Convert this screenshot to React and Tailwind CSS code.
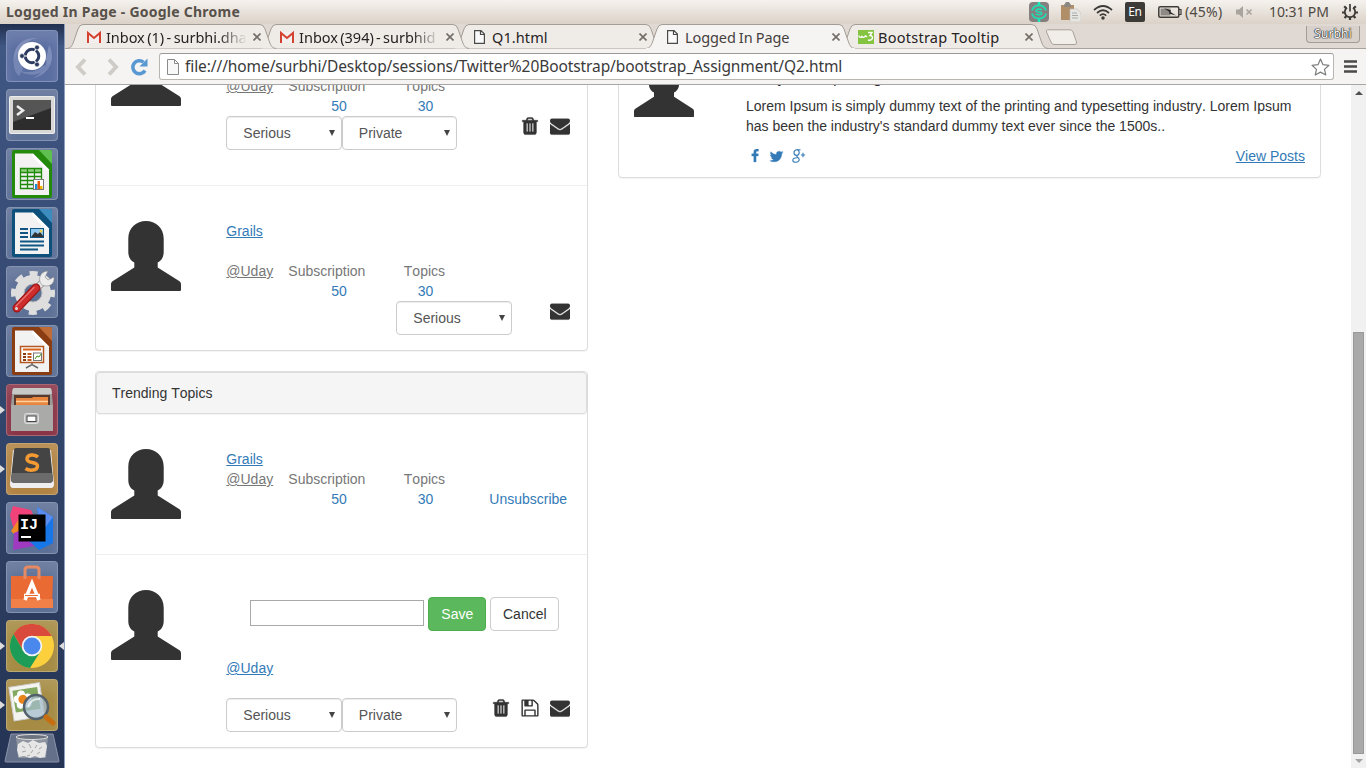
import React from "react";

const FA = {
  envelope:
    "M1792 710v794q0 66-47 113t-113 47h-1472q-66 0-113-47t-47-113v-794q44 49 101 87 362 246 497 345 57 42 92.500 65.500t94.500 48 110 24.500h2q51 0 110-24.500t94.500-48 92.500-65.500q170-123 498-345 57-39 100-87zm0-294q0 79-49 151t-122 123q-376 261-468 325-10 7-42.500 31t-54 38.500-52 32.500-57.500 27-50 9h-2q-23 0-50-9t-57.500-27-52-32.500-54-38.500-42.500-31q-91-64-262-182.500t-205-142.500q-62-42-117-115.500t-55-136.500q0-78 41.500-130t118.500-52h1472q65 0 112.500 47t47.500 113z",
  trash:
    "M704 1376v-704q0-14-9-23t-23-9h-64q-14 0-23 9t-9 23v704q0 14 9 23t23 9h64q14 0 23-9t9-23zm256 0v-704q0-14-9-23t-23-9h-64q-14 0-23 9t-9 23v704q0 14 9 23t23 9h64q14 0 23-9t9-23zm256 0v-704q0-14-9-23t-23-9h-64q-14 0-23 9t-9 23v704q0 14 9 23t23 9h64q14 0 23-9t9-23zm-544-992h448l-48-117q-7-9-17-11h-317q-10 2-17 11zm928 32v64q0 14-9 23t-23 9h-96v948q0 83-47 143.500t-113 60.500h-832q-66 0-113-58.500t-47-141.500v-952h-96q-14 0-23-9t-9-23v-64q0-14 9-23t23-9h309l70-167q15-37 54-63t79-26h320q40 0 79 26t54 63l70 167h309q14 0 23 9t9 23z",
  floppy:
    "M512 1536h768v-384h-768v384zm896 0h128v-896q0-14-10-38.500t-20-34.500l-281-281q-10-10-34-20t-39-10v416q0 40-28 68t-68 28h-576q-40 0-68-28t-28-68v-416h-128v1280h128v-416q0-40 28-68t68-28h832q40 0 68 28t28 68v416zm-384-928v-320q0-13-9.500-22.500t-22.500-9.500h-192q-13 0-22.500 9.500t-9.500 22.500v320q0 13 9.500 22.500t22.500 9.500h192q13 0 22.500-9.500t9.500-22.500zm640 32v928q0 40-28 68t-68 28h-1344q-40 0-68-28t-28-68v-1344q0-40 28-68t68-28h928q40 0 88 20t76 48l280 280q28 28 48 76t20 88z",
  facebook:
    "M1343 12v264h-157q-86 0-116 36t-30 108v189h293l-39 296h-254v759h-306v-759h-255v-296h255v-218q0-186 104-288.500t277-102.500q147 0 228 12z",
  twitter:
    "M1684 408q-67 98-162 167 1 14 1 42 0 130-38 259.500t-115.500 248.500-184.500 210.500-258 146-323 54.500q-271 0-496-145 35 4 78 4 225 0 401-138-105-2-188-64.500t-114-159.500q33 5 61 5 43 0 85-11-112-23-185.500-111.500t-73.500-205.500v-4q68 38 146 41-66-44-105-115t-39-154q0-88 44-163 121 149 294.500 238.500t371.500 99.500q-8-38-8-74 0-134 94.500-228.500t228.500-94.500q140 0 236 102 109-21 205-78-37 115-142 178 93-10 186-50z",
};

function Fa({ name, className }) {
  return (
    <svg
      viewBox="0 0 1792 1792"
      className={className}
      fill="currentColor"
      stroke="currentColor"
      strokeWidth={name === "floppy" ? 0 : 36}
    >
      <path d={FA[name]} />
    </svg>
  );
}

function GooglePlus() {
  return (
    <svg viewBox="0 0 14 14" className="h-3.5 w-3.5" fill="none" stroke="currentColor" strokeWidth="1.1">
      <path d="M8.500.7H5C3 .7 2 2.100 2 3.700c0 1.600 1.100 2.700 2.700 2.700 1.500 0 2.500-1.100 2.500-2.800C7.200 2 6.200.9 4.900.8M5 6.400c-.8 1 .1 1.500 1.200 2.300 2.200 1.600.7 4.600-2.200 4.600-2 0-3.200-.8-3.200-2.100 0-1.700 1.900-2.600 4.600-2.500M11 3.800v4.400M8.900 6H13.200" />
    </svg>
  );
}

function Avatar({ className = "h-[70px] w-[70px]" }) {
  return (
    <svg viewBox="0 0 70 70" className={"block shrink-0 " + className} fill="#333">
      <path d="M35 0C44.500 0 52.700 7 52.700 17.500V31C52.700 36.500 50 40 46.700 41.500V46.500L68.500 60.300Q70 61.300 70 63V69Q70 70 69 70H1Q0 70 0 69V63Q0 61.300 1.500 60.300L23.300 46.500V41.500C20 40 17.300 36.500 17.300 31V17.500C17.300 7 25.500 0 35 0Z" />
    </svg>
  );
}

function Tile({ className = "bg-[#5d7096]", children }) {
  return (
    <div
      className={
        "relative flex h-[52px] w-[52px] shrink-0 items-center justify-center rounded-[4px] border border-white/25 shadow-[inset_0_10px_12px_rgba(255,255,255,0.12)] " +
        className
      }
    >
      {children}
    </div>
  );
}

function Pip({ right }) {
  return (
    <svg viewBox="0 0 5 8" className={"absolute top-[21px] h-2 w-[5px] " + (right ? "-right-[7px]" : "-left-[7px]")} fill="#ddd">
      <path d={right ? "M5 0V8L0 4z" : "M0 0V8L5 4z"} />
    </svg>
  );
}

function DocIcon({ color, fold, children }) {
  return (
    <svg viewBox="0 0 40 48" className="h-12 w-10">
      <rect width="40" height="48" rx="2" fill={color} />
      <path d="M27 0H38Q40 0 40 2V14z" fill={fold} />
      <path d="M3 3.500H21L37 19.500V45H3z" fill="#f2f2f2" />
      <path d="M21 3.500L37 19.500 34 20.500 20 6.500z" fill="#fff" />
      {children}
    </svg>
  );
}

function Launcher() {
  return (
    <aside className="flex w-[65px] shrink-0 flex-col items-start gap-[7px] overflow-hidden border-r border-[#8e9fbd] bg-linear-to-b from-[#20304f] via-[#405784] via-3% to-[#253454] pt-1.5 pl-1.5">
      <Tile className="bg-[#5a6ea1]">
        <svg viewBox="0 0 50 50" className="h-[50px] w-[50px]">
          <path d="M7 34C4 14 18 4 33 8 24 7 17 12 15 20zM42 14c8 14 0 30-16 33 11-5 15-12 13-19z" fill="#8795bf" opacity=".8" />
          <path d="M12 45C2 36 8 20 20 13c-7 9-7 18-4 25zM44 33C36 46 20 46 11 39c10 4 19 2 25-4z" fill="#7586b5" />
          <circle cx="25" cy="25" r="14" fill="#fff" />
          <circle cx="25" cy="25" r="6.800" fill="none" stroke="#2c3b5f" strokeWidth="3" />
          <path d="M25 25L30 16M25 25L30 34M25 25H14" stroke="#fff" strokeWidth="1.200" />
          <circle cx="15" cy="25" r="2.400" fill="#2c3b5f" stroke="#fff" strokeWidth=".6" />
          <circle cx="30" cy="16.500" r="2.400" fill="#2c3b5f" stroke="#fff" strokeWidth=".6" />
          <circle cx="30" cy="33.500" r="2.400" fill="#2c3b5f" stroke="#fff" strokeWidth=".6" />
        </svg>
      </Tile>
      <Tile>
        <svg viewBox="0 0 46 38" className="h-[38px] w-[46px] shrink-0">
          <rect x=".5" y=".5" width="45" height="37" rx="1" fill="#d8d8d6" stroke="#eee" />
          <rect x="4" y="4" width="38" height="30" fill="#2d2d2d" />
          <path d="M4 4H42V12L4 26z" fill="#555" />
          <path d="M8 10L14 14.500 8 19" fill="none" stroke="#eee" strokeWidth="2.500" />
          <rect x="17" y="21" width="8" height="2" fill="#fff" />
        </svg>
      </Tile>
      <Tile>
        <DocIcon color="#238a0c" fold="#5fc04f">
          <path d="M8 18H30V22.500H8z" fill="#8fd07c" />
          <g fill="none" stroke="#1f8a0a" strokeWidth="1.300">
            <path d="M8.500 18.500H29.500V38.500H8.500zM8 22.500H30M8 26.500H30M8 30.500H30M8 34.500H30M15.500 18.500V38.500M22.500 18.500V38.500" />
          </g>
          <rect x="21.500" y="29.500" width="10" height="10" fill="#fff" stroke="#777" />
          <path d="M23 34h2.500v5H23z" fill="#1b90d8" />
          <path d="M25.500 31h2.500v8h-2.500z" fill="#e8590c" />
          <path d="M28 36h2.500v3H28z" fill="#f3b400" />
        </DocIcon>
      </Tile>
      <Tile>
        <DocIcon color="#0d507c" fold="#3d8cc0">
          <path d="M8 20h8M8 24h8M8 28h8M8 32.500h24M8 36.500h24M8 40.500h18" stroke="#0f5684" strokeWidth="1.800" />
          <rect x="18.500" y="19.500" width="13" height="9" fill="#8ec8ee" stroke="#0f5684" />
          <path d="M19 28l4-5 3 2 2-2 4 5z" fill="#333" />
          <circle cx="29" cy="22" r="1.500" fill="#f2d24b" />
        </DocIcon>
      </Tile>
      <Tile>
        <svg viewBox="0 0 48 48" className="h-12 w-12 shrink-0">
          <circle cx="25" cy="25" r="13.500" fill="none" stroke="#dedede" strokeWidth="9" />
          <circle cx="25" cy="25" r="19.500" fill="none" stroke="#dedede" strokeWidth="5" strokeDasharray="8 7.320" strokeDashoffset="4" />
          <circle cx="25" cy="25" r="9" fill="none" stroke="#bbb" />
          <path d="M28 21L36 13" stroke="#888" strokeWidth="7" />
          <path d="M28 21L36 13" stroke="#e8e8e8" strokeWidth="5.500" />
          <path d="M40 3L37 9 40 12 46 9C47 16 41 20 34 17 29 12 32 3 40 3z" fill="#ececec" stroke="#888" strokeWidth=".6" />
          <path d="M9 40L28 20" stroke="#9c1414" strokeWidth="9" strokeLinecap="round" />
          <path d="M9 40L28 20" stroke="#cf2c2c" strokeWidth="6.500" strokeLinecap="round" />
          <path d="M8 38L26 19.500" stroke="#e87474" strokeWidth="1.300" strokeLinecap="round" />
          <circle cx="8.500" cy="40.500" r="1.500" fill="#ddd" />
        </svg>
      </Tile>
      <Tile>
        <DocIcon color="#8a3d12" fold="#c06c38">
          <rect x="8.500" y="19.500" width="23" height="16" fill="#fff" stroke="#b4561f" strokeWidth="1.500" />
          <path d="M11 22.500h18" stroke="#d9621a" strokeWidth="2" />
          <path d="M11 27h3M11 30h3M11 33h3" stroke="#8a3d12" strokeWidth="2" />
          <path d="M15.500 27h4M15.500 30h4M15.500 33h4" stroke="#c05a20" strokeWidth="2" />
          <rect x="21.500" y="26" width="8" height="7.500" fill="#fff" stroke="#777" />
          <path d="M23 32l2-3 2 1 2-3" stroke="#3a9a1a" fill="none" />
          <path d="M20 36v2M14 41l6-3.500 6 3.500" stroke="#666" strokeWidth="1.500" fill="none" />
        </DocIcon>
      </Tile>
      <Tile className="bg-[#8a3446]">
        <Pip />
        <svg viewBox="0 0 44 44" className="h-11 w-11 shrink-0">
          <path d="M4 0H40Q41 0 41.500 2L43 17V43H1V17L2.500 2Q3 0 4 0z" fill="#9b9b99" />
          <path d="M4 0H40Q41 0 41.500 2L42 6H2L2.500 2Q3 0 4 0z" fill="#c8c8c6" />
          <rect x="4" y="7" width="36" height="12" fill="#5a3a2c" />
          <path d="M6 10h16l1-1h15v10H6z" fill="#e9863d" />
          <path d="M6 13.500H38" stroke="#ffd0a0" strokeWidth="1.500" />
          <path d="M1 17H43V43H1z" fill="#aaaaa8" />
          <rect x="14.500" y="25.500" width="14" height="10" rx="2" fill="#bdbdbd" stroke="#ddd" />
          <rect x="17" y="28" width="9" height="5.500" fill="#fff" stroke="#444" />
        </svg>
      </Tile>
      <Tile className="bg-[#b28444]">
        <Pip />
        <svg viewBox="0 0 46 42" className="h-[42px] w-[46px] shrink-0">
          <path d="M4 2L1 36Q1 40 4 40H42Q45 40 45 36L42 2z" fill="#eee" />
          <path d="M5 2Q5 0 7 0H39Q41 0 41 2L44 31Q44 35 40 35H6Q2 35 2 31z" fill="#444" />
          <path d="M2 31L3 25H43L44 31Q44 35 40 35H6Q2 35 2 31z" fill="#6b6b6b" />
          <path d="M29 9C26 6 18 6 18 11 18 16 28.500 13 28.500 18 28.500 23 20 23 16.500 20.500" fill="none" stroke="#f49a33" strokeWidth="3.500" />
        </svg>
      </Tile>
      <Tile>
        <svg viewBox="0 0 46 46" className="h-[46px] w-[46px] shrink-0">
          <path d="M1 10L4 1 22 5 26 14 13 30 4 22z" fill="#f2427a" />
          <path d="M2 26L10 14V34z" fill="#f08a24" />
          <path d="M5 28L14 24 30 40 4 45z" fill="#a03ac0" />
          <path d="M28 2L44 12V38L30 45 20 36 30 20z" fill="#1877e8" />
          <path d="M28 2L44 12 32 28z" fill="#5a8cf0" />
          <rect x="9.500" y="9.500" width="27" height="27" fill="#000" />
          <rect x="12" y="31" width="10" height="2" fill="#fff" />
          <text x="11" y="24" fontFamily="Liberation Mono" fontWeight="bold" fontSize="15" fill="#fff">IJ</text>
        </svg>
      </Tile>
      <Tile>
        <svg viewBox="0 0 42 44" className="h-11 w-[42px] shrink-0">
          <path d="M0 11H42L41 43H0z" fill="#e96b33" />
          <path d="M0 34H42V43H0z" fill="#f07f48" />
          <path d="M14 14V5Q14 2 17 2H25Q28 2 28 5V14" fill="none" stroke="#e58a62" strokeWidth="3" />
          <path d="M14 35L21 18 28 35M13 30.500H29" fill="none" stroke="#fff" strokeWidth="3.500" />
          <path d="M14 30.500H27" stroke="#e96b33" strokeWidth="1" />
        </svg>
      </Tile>
      <Tile className="bg-[#a58b43]">
        <Pip />
        <Pip right />
        <svg viewBox="-22 -22 44 44" className="h-11 w-11 shrink-0">
          <circle r="22" fill="#fbd03c" />
          <path d="M0-10H19.600A22 22 0 0 0-18.500-12L-8.700 5z" fill="#d9493c" />
          <path d="M-18.500-12A22 22 0 0 0-2 21.900L8.700 5-8.700 5z" fill="#1d9c58" />
          <circle r="10.300" fill="#f4f4f4" />
          <circle r="8.500" fill="#4a88ee" />
        </svg>
      </Tile>
      <Tile className="bg-[#a58b43]">
        <Pip />
        <svg viewBox="0 0 50 50" className="h-[50px] w-[50px] shrink-0">
          <g transform="rotate(-9 18 20)">
            <rect x="4" y="5" width="31" height="34" fill="#f3f3f0" stroke="#ccc" />
            <rect x="7" y="9" width="25" height="22" fill="#83a860" />
            <g fill="#fff">
              <circle cx="15" cy="14" r="4" />
              <circle cx="21" cy="18" r="4" />
              <circle cx="20" cy="24" r="4" />
              <circle cx="13" cy="24" r="4" />
              <circle cx="11" cy="18" r="4" />
            </g>
            <circle cx="16" cy="19" r="4.500" fill="#e9851b" />
          </g>
          <circle cx="29" cy="27" r="12" fill="#a4bccb" fillOpacity=".75" stroke="#54606a" strokeWidth="2.500" />
          <path d="M21 27Q24 18 33 19" stroke="#fff" strokeOpacity=".7" strokeWidth="2" fill="none" />
          <path d="M39 37L46 43" stroke="#c76f10" strokeWidth="5" strokeLinecap="round" />
        </svg>
      </Tile>
      <svg viewBox="0 0 56 30" className="-mt-[5px] -ml-[2px] h-[30px] w-14 shrink-0">
        <path d="M7 1H49L55 28Q55 29 54 29H2Q1 29 1 28z" fill="#64708a" stroke="#8993a8" />
        <path d="M12 3H44L42 25H14z" fill="#8e95a0" />
        <ellipse cx="28" cy="4" rx="16" ry="2.500" fill="#6d7480" stroke="#ddd" />
        <path d="M14 11l5-3 5 2 5-3 6 3 6-1 2 4-2 11-5 1-5-2-5 2-6-2-5 1-2-7z" fill="#e6e6e6" />
        <path d="M18 13l3 2M25 11l2 4M33 12l-2 3M38 14l-3 2M18 19l4-1M27 20l2-3M33 21l3-2M23 23l3-1" stroke="#a5a5a5" fill="none" />
      </svg>
    </aside>
  );
}

function TopBar() {
  return (
    <header className="flex h-6 shrink-0 items-center bg-linear-to-b from-[#f5f2ee] to-[#dbd2c8] pl-[6px] font-['Noto_Sans',sans-serif] text-[#4e4943]">
      <span className="text-[14px] leading-6 font-bold tracking-[0.240px] whitespace-nowrap text-[#57514a]">Logged In Page - Google Chrome</span>
      <div className="ml-auto flex items-center">
        <svg viewBox="0 0 20 20" className="mr-3 h-5 w-5">
          <rect width="20" height="20" rx="4" fill="#867f80" />
          <path d="M10 0V4M10 16V20" stroke="#20e8b8" strokeWidth="2.500" />
          <path d="M3 8.500A7.200 6.500 0 0 1 17 8.500M3 11.500A7.200 6.500 0 0 0 17 11.500" fill="none" stroke="#20dcb0" strokeWidth="1.800" />
          <path d="M13 8C11 6.500 7 7 7 8.700S13 9.500 12.800 11.300 8.500 13 6.700 11.900" fill="none" stroke="#20dcb0" strokeWidth="1.600" />
        </svg>
        <svg viewBox="0 0 20 20" className="mr-3 h-5 w-5">
          <path d="M0 3H13V18H0z" fill="#b08e68" />
          <path d="M3 3L5 0H8L10 3V5H3z" fill="#8b8781" />
          <path d="M9 7H16L20 11V20H9z" fill="#e6e6e3" stroke="#c4c1bc" strokeWidth=".6" />
          <path d="M11 11h5M11 13.500h6M11 16h6" stroke="#aaa" />
        </svg>
        <svg viewBox="0 0 20 16" className="mr-3 h-4 w-5" fill="none" stroke="#3e3b37" strokeWidth="1.700">
          <path d="M1 6Q10-2 19 6M4 9Q10 3.500 16 9M6.800 11.700Q10 8.700 13.200 11.700" />
          <circle cx="10" cy="14" r=".9" fill="#3e3b37" />
        </svg>
        <span className="mr-[13px] flex h-5 w-5 items-center justify-center rounded-[2px] bg-[#3c3b37] text-[12px] tracking-[-0.300px] text-white">En</span>
        <svg viewBox="0 0 24 12" className="mr-[3px] h-3 w-6">
          <rect x=".8" y=".8" width="20" height="10.400" rx="1.500" fill="none" stroke="#3e3b37" strokeWidth="1.500" />
          <path d="M21 3.500h2v5h-2" fill="none" stroke="#3e3b37" strokeWidth="1.200" />
          <rect x="2.500" y="2.500" width="10" height="7" fill="#8d8984" />
          <path d="M6 2L13 4.500 12.500 6 18 9.500 11 7.500 11.500 6z" fill="#222" />
        </svg>
        <span className="mr-[13px] w-[38px] text-[14px] leading-[22px] tracking-[0.300px] whitespace-nowrap">(45%)</span>
        <svg viewBox="0 0 17 12" className="mr-4 h-3 w-[17px]">
          <path d="M0 3.500H3L7 0V12L3 8.500H0z" fill="#a9a49d" />
          <path d="M10.500 3.500l5 5M15.500 3.500l-5 5" stroke="#a9a49d" strokeWidth="1.600" />
        </svg>
        <span className="mr-[13px] mb-px w-[60px] text-[14px] leading-[22px] tracking-[-0.100px] whitespace-nowrap">10:31 PM</span>
        <svg viewBox="0 0 16 16" className="mr-2 h-4 w-4" fill="none" stroke="#3e3b37">
          <path d="M5 3.800A5.200 5.200 0 1 0 11 3.800" strokeWidth="1.800" />
          <path d="M8 0V7.500" strokeWidth="1.700" />
          <path d="M2.200 2.200L4.300 4.300M13.800 2.200L11.700 4.300M0 8.500H3M13 8.500H16M2.500 14L4.500 12M13.500 14L11.500 12M8 13V16" strokeWidth="2.200" />
        </svg>
      </div>
    </header>
  );
}

function Gmail() {
  return (
    <svg viewBox="0 0 16 16" className="h-4 w-4 shrink-0">
      <rect x="1.500" y="3" width="13" height="11" fill="#f3efef" />
      <path d="M2 14V4L8 9 14 4V14" fill="none" stroke="#d5412f" strokeWidth="2" />
    </svg>
  );
}

function Page({ className = "h-4 w-4" }) {
  return (
    <svg viewBox="0 0 16 16" className={"shrink-0 " + className} fill="#fafafa" stroke="#4a4a4a" strokeWidth="1.200">
      <path d="M2.600 1.600H9L12.400 5V14.400H2.600zM8.500 1.600V5.500H12.400" />
    </svg>
  );
}

function W3() {
  return (
    <svg viewBox="0 0 16 14" className="h-3.5 w-4 shrink-0">
      <rect width="16" height="14" fill="#85c440" />
      <path d="M.8 5.500C1 8 3.500 8 3.800 5.800 4.200 8 7 8 7.200 5.500M7.200 5.500L9 7M10 2.500h4L12 5.500c4 0 3 6-2 4.500" fill="none" stroke="#fff" strokeWidth="1.400" />
    </svg>
  );
}

const TABS = [
  { icon: <Gmail />, title: "Inbox (1) - surbhi.dha", size: "text-[14.500px]", track: "tracking-[-0.050px] [word-spacing:-1.200px]", z: "z-[4]", fade: true },
  { icon: <Gmail />, title: "Inbox (394) - surbhid", size: "text-[14.500px]", track: "tracking-[0px] [word-spacing:-1.500px]", z: "z-[3]", fade: true },
  { icon: <Page />, title: "Q1.html", size: "text-[14.500px]", track: "tracking-[0.100px]", z: "z-[2]" },
  { icon: <Page />, title: "Logged In Page", size: "text-[14.500px]", track: "tracking-[-0.100px] [word-spacing:-0.500px]", z: "z-10", active: true },
  { icon: <W3 />, title: "Bootstrap Tooltip", size: "text-[14.500px]", track: "tracking-[0.250px]", z: "z-[1]" },
];

function Tab({ icon, title, size, track, fade, active, z }) {
  return (
    <div className={"relative h-[25px] w-[193px] shrink-0 " + z}>
      <svg viewBox="0 0 212 25" className="absolute top-0 -left-2.5 h-[25px] w-[212px]">
        <path
          d="M1 24.500C5 24 6 22 7.500 18L12 5Q13.500 .5 17 .5H194Q197.500 .5 199 5L203.500 18C205 22 206 24 210 24.500"
          fill={active ? "#f5f4f2" : "#efece8"}
          stroke="#a49d96"
        />
        {active && <path d="M1 24.700H210" stroke="#f5f4f2" strokeWidth="1.500" />}
      </svg>
      <div className={"relative flex h-full items-center pt-px pl-[10px] " + size + (active ? " text-[#45403d]" : " text-[#262223]")}>
        {icon}
        <span
          className={
            "ml-1 w-[141px] overflow-hidden leading-6 whitespace-nowrap " + track + (fade ? " [mask-image:linear-gradient(to_right,#000_80%,transparent)]" : "")
          }
        >
          {title}
        </span>
        <svg viewBox="0 0 8 8" className="ml-[6px] h-2 w-2 shrink-0" stroke="#746c66" strokeWidth="1.600">
          <path d="M.5 .5l7 7M7.500 .5l-7 7" />
        </svg>
      </div>
    </div>
  );
}

function TabStrip() {
  return (
    <div className="flex h-[25px] shrink-0 border-b border-[#a8a29c] bg-[#e0d8d2] pl-[11px] font-['Noto_Sans',sans-serif]">
      {TABS.map((t) => (
        <Tab key={t.title} {...t} />
      ))}
      <svg viewBox="0 0 34 17" className="mt-[5px] ml-[4px] h-[17px] w-[34px]">
        <path d="M2.500 .8H25Q27 .8 28 3L31.500 13Q32 15.500 30 15.500H9Q7 15.500 6 13L1.500 3Q1 .8 2.500 .8z" fill="#f1eeea" stroke="#a8a19b" />
      </svg>
      <div className="mt-[2px] mr-[6px] ml-auto flex h-[17px] w-[54px] items-center justify-center rounded-b-[4px] border border-t-0 border-[#a39b95] bg-[#d8d0ca] text-[12px] tracking-[0.100px] text-white [text-shadow:0_0_1px_#222,0_0_1px_#222,0_0_1px_#222,0_0_1px_#222]">
        Surbhi
      </div>
    </div>
  );
}

function Toolbar() {
  return (
    <div className="flex h-9 shrink-0 items-center border-b border-[#a9a6a3] bg-[#f5f4f2] pl-[9px]">
      <svg viewBox="0 0 14 18" className="h-[18px] w-3.5" fill="none" stroke="#cfccc8" strokeWidth="4">
        <path d="M11 1.500L4 9L11 16.500" />
      </svg>
      <svg viewBox="0 0 14 18" className="ml-[18px] h-[18px] w-3.5" fill="none" stroke="#cfccc8" strokeWidth="4">
        <path d="M3 1.500L10 9L3 16.500" />
      </svg>
      <svg viewBox="0 0 18 18" className="ml-[10px] h-[18px] w-[18px]">
        <path d="M13.500 4.200A6.500 6.500 0 1 0 15 12.500" fill="none" stroke="#5a98d2" strokeWidth="3.500" />
        <path d="M17.500 .5V8.500H9.500z" fill="#5a98d2" />
      </svg>
      <div className="ml-[11px] flex h-[27px] w-[1175px] items-center rounded-[3px] border border-[#b9b6b2] border-t-[#9c9996] bg-white">
        <svg viewBox="0 0 12 16" className="ml-[7px] h-4 w-3" fill="#f8f8f8" stroke="#8b8b8b">
          <path d="M.5 .5H7.500L11.500 4.500V15.500H.5zM7.500 .5V4.500H11.500" />
        </svg>
        <span className="mb-[2px] ml-[6px] font-['Noto_Sans',sans-serif] text-[15.500px] leading-6 tracking-[-0.090px] whitespace-nowrap text-[#3a3a3a]">
          file:///home/surbhi/Desktop/sessions/Twitter%20Bootstrap/bootstrap_Assignment/Q2.html
        </span>
        <svg viewBox="0 0 19 18" className="mr-[3px] ml-auto h-[18px] w-[19px]" fill="#fff" stroke="#7d7d7d" strokeWidth="1.200">
          <path d="M9.500 1L12 6.700 18 7.300 13.500 11.400 14.800 17 9.500 14.100 4.200 17 5.500 11.400 1 7.300 7 6.700z" strokeLinejoin="round" />
        </svg>
      </div>
      <svg viewBox="0 0 13 13" className="ml-[10px] h-[13px] w-[13px]" stroke="#4c4a48" strokeWidth="2.600">
        <path d="M0 1.500H13M0 6.500H13M0 11.500H13" />
      </svg>
    </div>
  );
}

function Select({ children }) {
  return (
    <div className="flex h-[34px] w-[115.500px] shrink-0 items-center justify-between rounded-[4px] border border-[#ccc] bg-white pr-[6px] pl-4 text-[#555] shadow-[inset_0_1px_1px_rgba(0,0,0,0.075)]">
      {children}
      <svg viewBox="0 0 6 6" className="h-1.5 w-1.5" fill="#444">
        <path d="M0 0H6L3 6z" />
      </svg>
    </div>
  );
}

function Actions({ names }) {
  return (
    <div className="mr-[2.400px] ml-auto flex gap-[9.500px] text-[#333]">
      {names.map((n) => (
        <Fa key={n} name={n} className="h-5 w-5" />
      ))}
    </div>
  );
}

function Stats({ action }) {
  return (
    <div className="grid grid-cols-[62px_115.500px_85.500px_auto] text-[#777]">
      <span className="underline">@Uday</span>
      <span>Subscription</span>
      <span>Topics</span>
      <span />
      <span />
      <span className="pl-[43px] text-[#337ab7]">50</span>
      <span className="pl-[14px] text-[#337ab7]">30</span>
      <span className="text-[#337ab7]">{action}</span>
    </div>
  );
}

function Row({ className = "", children }) {
  return (
    <div className={"flex px-[15px] pt-[35px] " + className}>
      <Avatar />
      <div className="ml-[45.300px] min-w-0 flex-1">{children}</div>
    </div>
  );
}

const PANEL = "rounded-[4px] border border-[#ddd] bg-white shadow-[0_1px_1px_rgba(0,0,0,0.05)]";

function Content() {
  return (
    <main className="-mt-[85px] flex min-w-0 flex-1 items-start gap-[30px] pl-[30px]">
      <div className="w-[493px] shrink-0">
        <section className={PANEL}>
          <Row className="h-[185px] border-b border-[#eee]">
            <div className="pt-10">
              <Stats />
              <div className="flex">
                <Select>Serious</Select>
                <Select>Private</Select>
                <Actions names={["trash", "envelope"]} />
              </div>
            </div>
          </Row>
          <Row className="pb-[15px]">
            <div className="mb-5 text-[#337ab7] underline">Grails</div>
            <Stats />
            <div className="flex pl-[170px]">
              <Select>Serious</Select>
              <Actions names={["envelope"]} />
            </div>
          </Row>
        </section>
        <section className={"mt-5 " + PANEL}>
          <div className="rounded-[4px] border border-[#ddd] bg-[#f5f5f5] px-[15px] py-2.5 shadow-[0_1px_1px_rgba(0,0,0,0.05)]">Trending Topics</div>
          <Row className="border-b border-[#eee] pb-[35px]">
            <div className="text-[#337ab7] underline">Grails</div>
            <Stats action="Unsubscribe" />
          </Row>
          <Row className="pb-[15px]">
            <div className="flex items-center gap-1 pt-[7px] pl-6">
              <div className="mb-0.5 h-[26px] w-[174px] border border-[#a9a9a9] bg-white" />
              <button className="h-[34px] w-[58px] rounded-[4px] border border-[#4cae4c] bg-[#5cb85c] text-white">Save</button>
              <button className="h-[34px] w-[69px] rounded-[4px] border border-[#ccc] bg-white">Cancel</button>
            </div>
            <div className="mt-[27px] mb-5 text-[#337ab7] underline">@Uday</div>
            <div className="flex">
              <Select>Serious</Select>
              <Select>Private</Select>
              <Actions names={["trash", "floppy", "envelope"]} />
            </div>
          </Row>
        </section>
      </div>
      <section className={"mt-px flex h-[177px] w-[703px] items-start pr-[15px] pl-[15px] " + PANEL}>
        <Avatar className="mt-[55px] h-[60px] w-[60px]" />
        <div className="ml-[52px] flex-1 pt-[66px]">
          <div className="h-5 text-base leading-5 tracking-[0.700px] whitespace-nowrap">Uday Pratap Singh</div>
          <p className="mt-2">
            Lorem Ipsum is simply dummy text of the printing and typesetting industry. Lorem Ipsum has been the industry's standard dummy text ever since the
            1500s..
          </p>
          <div className="mt-2.5 flex items-center text-[#337ab7]">
            <Fa name="facebook" className="ml-[2px] h-3.5 w-3.5" />
            <Fa name="twitter" className="ml-[7px] h-[15px] w-[15px]" />
            <span className="ml-[8px]">
              <GooglePlus />
            </span>
            <span className="ml-auto underline">View Posts</span>
          </div>
        </div>
      </section>
    </main>
  );
}

function Scrollbar() {
  return (
    <div className="flex w-[15px] shrink-0 flex-col items-center bg-[#f1f1f1] pt-[6px]">
      <svg viewBox="0 0 8 4" className="h-1 w-2" fill="#505050">
        <path d="M0 4H8L4 0z" />
      </svg>
      <div className="mt-[237px] h-[422px] w-[11px] border border-[#999] bg-[#a9a9a9]" />
      <svg viewBox="0 0 8 4" className="mt-[5px] h-1 w-2" fill="#a3a3a3">
        <path d="M0 0H8L4 4z" />
      </svg>
    </div>
  );
}

export default function App() {
  return (
    <div className="flex h-[768px] w-[1366px] flex-col overflow-hidden bg-white">
      <TopBar />
      <div className="flex min-h-0 flex-1">
        <Launcher />
        <div className="flex min-w-0 flex-1 flex-col">
          <TabStrip />
          <Toolbar />
          <div className="flex min-h-0 flex-1 overflow-hidden font-['Liberation_Sans',Arial,sans-serif] text-sm leading-5 text-[#333] [font-kerning:none]">
            <Content />
            <Scrollbar />
          </div>
        </div>
      </div>
    </div>
  );
}
